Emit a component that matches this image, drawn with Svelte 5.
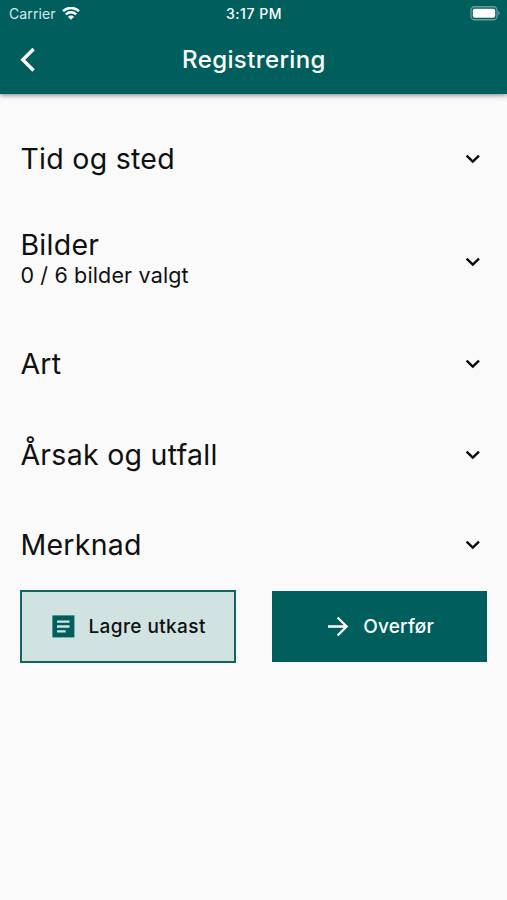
<script>
  const sections = [
    { title: 'Tid og sted' },
    { title: 'Bilder', subtitle: '0 / 6 bilder valgt' },
    { title: 'Art' },
    { title: 'Årsak og utfall' },
    { title: 'Merknad' }
  ];
</script>

<div class="screen">
  <header>
    <div class="status">
      <div class="carrier">
        <span>Carrier</span>
        <svg width="18" height="14" viewBox="0 0 18 14" fill="none" stroke="#fff" stroke-width="2.5">
          <path d="M1 4.2a11.4 11.4 0 0 1 16 0" />
          <path d="M3.8 7.3a7.4 7.4 0 0 1 10.4 0" />
          <path d="M9 12.7L5.9 9.7a4.4 4.4 0 0 1 6.2 0z" fill="#fff" stroke="none" />
        </svg>
      </div>
      <span class="time">3:17 PM</span>
      <svg class="battery" width="31" height="15" viewBox="0 0 31 15">
        <rect x="1" y="0.75" width="26" height="13" rx="3.5" fill="none" stroke="#fff" stroke-opacity="0.4" stroke-width="1.3" />
        <rect x="2.8" y="2.7" width="22.4" height="9.1" rx="1.8" fill="#fff" />
        <path d="M28.3 5v4.6a2.6 2.6 0 0 0 0-4.6z" fill="#fff" fill-opacity="0.45" />
      </svg>
    </div>
    <div class="bar">
      <svg class="back" width="17" height="26" viewBox="0 0 17 26" fill="none" stroke="#fff" stroke-width="3.4">
        <path d="M14.6 2L3.8 12.7l10.8 10.8" />
      </svg>
      <h1>Registrering</h1>
    </div>
  </header>

  <main>
    {#each sections as section}
      <div class="section" class:tall={section.subtitle}>
        <div class="text">
          <h2>{section.title}</h2>
          {#if section.subtitle}
            <p>{section.subtitle}</p>
          {/if}
        </div>
        <svg width="16" height="12" viewBox="0 0 16 12" fill="none" stroke="#0b0b0b" stroke-width="2.4">
          <path d="M1.6 2.7l6.2 6 6.2-6" />
        </svg>
      </div>
    {/each}

    <div class="actions">
      <button class="draft">
        <svg width="23" height="23" viewBox="0 0 23 23">
          <rect x="0.4" y="0.4" width="22" height="22" fill="#005f5d" />
          <path d="M5 6.7h12.5M5 11.5h12.5M5 16.3h8.7" stroke="#d0e3e1" stroke-width="2.3" />
        </svg>
        <span>Lagre utkast</span>
      </button>
      <button class="submit">
        <svg width="22" height="22" viewBox="0 0 22 22" fill="none" stroke="#fff" stroke-width="2.3">
          <path d="M1 10.5h18.6M10.6 1.5l9 9-9 9" />
        </svg>
        <span>Overfør</span>
      </button>
    </div>
  </main>
</div>

<style>
  :global(body) {
    background: #fafafa;
  }

  .screen {
    height: 900px;
    background: #fafafa;
    color: #101010;
    font-family: Inter, "Liberation Sans", sans-serif;
  }

  header {
    height: 94px;
    background: #005f5d;
    color: #fff;
    box-shadow: 0 1px 5px rgba(0, 0, 0, 0.5);
  }

  .status {
    display: grid;
    grid-template-columns: 1fr auto 1fr;
    align-items: center;
    height: 27px;
    padding: 0 6px 0 9px;
    font-size: 14px;
  }

  .carrier {
    display: flex;
    align-items: center;
    gap: 6px;
    color: #d9e8e7;
    letter-spacing: 0.1px;
  }

  .time {
    margin-right: 2px;
    font-weight: 500;
    font-size: 14px;
    letter-spacing: 0.55px;
  }

  .battery {
    justify-self: end;
  }

  .bar {
    display: grid;
    grid-template-columns: 40px 1fr 40px;
    align-items: center;
    height: 65px;
    padding: 0 19px;
  }

  h1 {
    margin: 0;
    padding-left: 1px;
    font-size: 24px;
    font-weight: 500;
    line-height: 30px;
    text-align: center;
    letter-spacing: 0.38px;
  }

  main {
    padding: 20px 19.6px 0 20.4px;
  }

  .section {
    display: flex;
    align-items: center;
    justify-content: space-between;
    height: 90.5px;
    padding-right: 6.5px;
  }

  .section.tall {
    height: 114.4px;
  }

  .tall .text {
    padding-bottom: 8px;
  }

  h2 {
    margin: 0;
    font-size: 28.5px;
    font-weight: 400;
    line-height: 34px;
    letter-spacing: 0.28px;
  }

  p {
    margin: 0;
    font-size: 21.5px;
    line-height: 26px;
    letter-spacing: 0.15px;
  }

  .actions {
    display: flex;
    align-items: center;
    justify-content: space-between;
    height: 73px;
    margin-top: -0.4px;
  }

  button {
    display: flex;
    align-items: center;
    justify-content: center;
    box-sizing: border-box;
    width: 215.5px;
    height: 71px;
    padding: 0 0 0 2px;
    border: 0;
    font-family: inherit;
    font-size: 19px;
    font-weight: 500;
    letter-spacing: 0.2px;
  }

  .draft {
    gap: 13px;
    height: 73px;
    border: 2px solid #13655f;
    background: #d0e3e1;
    color: #101010;
    letter-spacing: 0.4px;
  }

  .submit {
    gap: 14px;
    background: #005f5d;
    color: #fff;
  }
</style>
